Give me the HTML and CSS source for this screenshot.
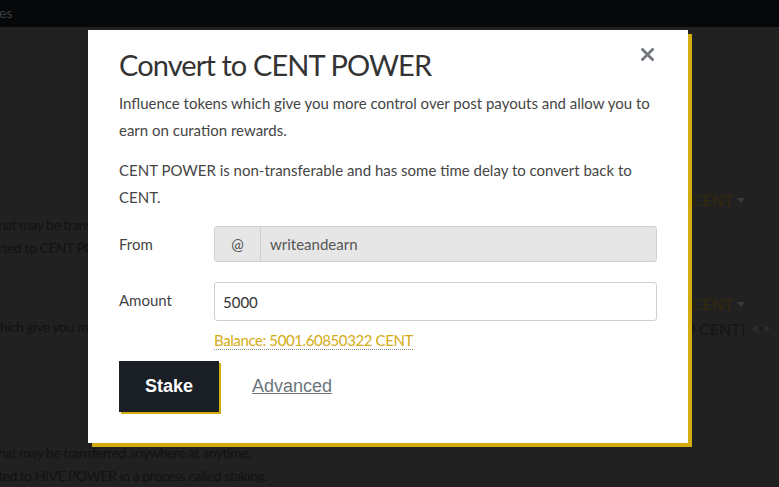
FILE: index.html
```html
<!DOCTYPE html>
<html>
<head>
<meta charset="utf-8">
<link rel="stylesheet" href="styles.css">
</head>
<body>
<div class="page">
  <header class="topbar"><span class="top-link">es</span></header>
  <main class="content">
    <section class="block block-a">
      <div class="row-head"><span class="spacer"></span><span class="amount-drop">00 CENT <span class="caret"></span></span></div>
      <p class="bg-line">hat may be transferred anywhere at anytime.</p>
      <p class="bg-line">rted to CENT POWER in a process called staking.</p>
    </section>
    <section class="block block-b">
      <div class="row-head"><span class="spacer"></span><span class="amount-drop">0 CENT <span class="caret"></span></span></div>
      <div class="row-line"><p class="bg-line">hich give you more control over post payouts</p><span class="delegated">000 CENT)<svg class="eye" viewBox="0 0 20 12" width="20" height="12"><path d="M1 6 C4 1 16 1 19 6 C16 11 4 11 1 6 Z" fill="#2a2a2a"/><circle cx="10" cy="6" r="3" fill="#1e1e1e"/></svg></span></div>
    </section>
    <section class="block block-c">
      <p class="bg-line">hat may be transferred anywhere at anytime.</p>
      <p class="bg-line">ted to HIVE POWER in a process called staking.</p>
    </section>
  </main>
  <div class="modal">
    <button class="close" aria-label="Close"><svg viewBox="0 0 13 13" width="13" height="13"><path d="M1.5 1.5 L11.5 11.5 M11.5 1.5 L1.5 11.5" stroke="#72787e" stroke-width="2.8" stroke-linecap="square"/></svg></button>
    <h2 class="title">Convert to CENT POWER</h2>
    <p class="desc">Influence tokens which give you more control over post payouts and allow you to earn on curation rewards.</p>
    <p class="desc">CENT POWER is non-transferable and has some time delay to convert back to CENT.</p>
    <div class="form-row from-row">
      <label class="label">From</label>
      <div class="input-group">
        <span class="addon">@</span>
        <span class="field readonly">writeandearn</span>
      </div>
    </div>
    <div class="form-row amount-row">
      <label class="label">Amount</label>
      <div class="input-plain"><span class="field">5000</span></div>
    </div>
    <div class="balance-wrap"><span class="balance">Balance: 5001.60850322 CENT</span></div>
    <div class="actions">
      <button class="stake">Stake</button>
      <a class="advanced" href="#">Advanced</a>
    </div>
  </div>
</div>
</body>
</html>
```
FILE: styles.css
```css
* { box-sizing: border-box; }
html, body { margin: 0; padding: 0; }
body {
  width: 779px;
  height: 487px;
  overflow: hidden;
  background: #212121;
  font-family: "Lato", "Open Sans", sans-serif;
}
.page { position: relative; width: 779px; height: 487px; overflow: hidden; }
.topbar {
  height: 27px;
  background: #07080a;
  padding: 2px 0 0 0;
}
.top-link {
  display: inline-block;
  margin-left: -1px;
  color: #3b3e43;
  font-size: 14px;
  line-height: 16px;
}
.content { padding-top: 160px; }
.bg-line {
  margin: 0;
  color: #121212;
  font-size: 14px;
  letter-spacing: -0.5px;
  line-height: 23px;
  white-space: nowrap;
}
.row-head { display: flex; justify-content: space-between; height: 26px; }
.amount-drop {
  margin-right: 34px;
  color: #33290b;
  font-size: 16px;
  line-height: 26px;
}
.caret {
  display: inline-block;
  width: 0; height: 0;
  border-left: 4px solid transparent;
  border-right: 4px solid transparent;
  border-top: 5px solid #3a3a3a;
  vertical-align: 3px;
}
.block-a { margin-top: 0; }
.block-a .bg-line { margin-left: -2px; }
.block-b { margin-top: 32px; }
.block-b .row-head { height: 24px; }
.row-line { display: flex; justify-content: space-between; align-items: center; }
.delegated {
  display: flex; align-items: center; gap: 6px;
  color: #131313; font-size: 16px; margin-right: 8px; margin-top: 4px;
}
.block-c { margin-top: 103px; }
.block-c .bg-line { margin-left: -2px; }

.modal {
  position: absolute;
  top: 30px; left: 88px;
  width: 600px;
  background: #fff;
  padding: 16px 31px 31px 31px;
  box-shadow: 4px 4px 0 #d3ad10;
}
.close {
  position: absolute;
  top: 18px; right: 34px;
  width: 13px; height: 13px;
  padding: 0; border: 0; background: none;
  display: flex;
}
.title {
  margin: 0;
  font-weight: 400;
  font-size: 29px;
  letter-spacing: -0.9px;
  line-height: 38px;
  color: #333;
}
.desc {
  margin: 6px 0 0 0;
  font-size: 15px;
  line-height: 27px;
  color: #454545;
}
.desc + .desc { margin-top: 13px; }
.form-row { display: flex; align-items: center; }
.from-row { margin-top: 15px; height: 36px; }
.amount-row { margin-top: 20px; height: 39px; }
.label {
  width: 95px;
  font-size: 15px;
  color: #454545;
}
.amount-row .label { margin-top: -3px; }
.input-group {
  flex: 1;
  height: 36px;
  display: flex;
  border: 1px solid #cfcfcf;
  border-radius: 3px;
  background: #e6e6e6;
}
.addon {
  width: 46px;
  border-right: 1px solid #cfcfcf;
  display: flex; align-items: center; justify-content: center;
  font-size: 15px; color: #555;
}
.field {
  display: flex; align-items: center;
  padding-left: 8px;
  font-size: 15px; color: #555;
}
.readonly { padding-left: 9px; }
.input-plain {
  flex: 1; height: 39px;
  display: flex;
  border: 1px solid #cfcfcf;
  border-radius: 3px;
  background: #fff;
}
.input-plain .field { color: #333; }
.balance-wrap { margin-top: 9px; padding-left: 95px; height: 19px; }
.balance {
  display: inline-block;
  color: #d4ab14;
  font-size: 15px;
  letter-spacing: -0.4px;
  line-height: 18px;
  border-bottom: 1px dotted #8a8a8a;
}
.actions { display: flex; align-items: center; margin-top: 12px; }
.stake {
  width: 100px; height: 51px;
  background: #1a1f26;
  color: #fff;
  border: 0;
  font-family: "Liberation Sans", Arial, sans-serif;
  font-weight: 700;
  font-size: 18px;
  box-shadow: 2px 2px 0 #d3ad10;
  padding: 0;
}
.advanced {
  margin-left: 33px;
  font-family: "Liberation Sans", Arial, sans-serif;
  font-size: 18px;
  color: #6c757d;
  text-decoration: underline;
}
```
